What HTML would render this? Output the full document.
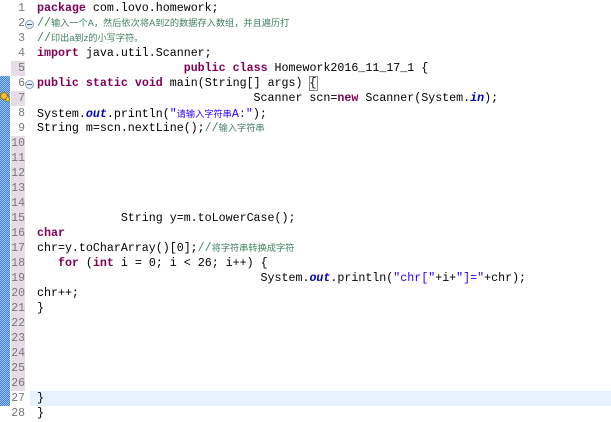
<!DOCTYPE html><html><head><style>
body{margin:0;width:611px;height:422px;background:#fff;overflow:hidden;position:relative;font-family:"Liberation Mono",monospace;font-size:11.65px}
.chk{position:absolute;left:0;top:76px;width:10px;height:330px;background-color:#9fc3ee;background-image:linear-gradient(45deg,#3f7fd8 25%,transparent 25%,transparent 75%,#3f7fd8 75%),linear-gradient(45deg,#3f7fd8 25%,transparent 25%,transparent 75%,#3f7fd8 75%);background-size:2px 2px;background-position:0 0,1px 1px}
.ln{position:absolute;left:11px;width:14px;height:15px;line-height:15px;text-align:right;color:#787878;font-size:11.5px}
.p{background:#e8dbe8}
.c{position:absolute;left:37px;height:15px;line-height:15px;white-space:pre;color:#000}
.k{color:#7f0055;font-weight:bold}
.s{color:#2a00ff}
.cm{color:#3f7f5f;font-family:"Liberation Sans","Noto Sans CJK SC",sans-serif;font-size:9.2px}
.o{color:#0000c0;font-style:italic;font-weight:bold}
.hl{position:absolute;left:30px;right:0;top:391px;height:15px;background:#e8f2fe}
</style></head><body>
<div class="chk"></div>
<div class="hl"></div>
<div class="ln" style="top:1px">1</div>
<div class="ln" style="top:16px">2</div>
<div class="ln" style="top:31px">3</div>
<div class="ln" style="top:46px">4</div>
<div class="ln p" style="top:61px">5</div>
<div class="ln" style="top:76px">6</div>
<div class="ln p" style="top:91px">7</div>
<div class="ln" style="top:106px">8</div>
<div class="ln" style="top:121px">9</div>
<div class="ln p" style="top:136px">10</div>
<div class="ln p" style="top:151px">11</div>
<div class="ln p" style="top:166px">12</div>
<div class="ln p" style="top:181px">13</div>
<div class="ln p" style="top:196px">14</div>
<div class="ln p" style="top:211px">15</div>
<div class="ln p" style="top:226px">16</div>
<div class="ln p" style="top:241px">17</div>
<div class="ln p" style="top:256px">18</div>
<div class="ln p" style="top:271px">19</div>
<div class="ln p" style="top:286px">20</div>
<div class="ln p" style="top:301px">21</div>
<div class="ln p" style="top:316px">22</div>
<div class="ln p" style="top:331px">23</div>
<div class="ln p" style="top:346px">24</div>
<div class="ln p" style="top:361px">25</div>
<div class="ln p" style="top:376px">26</div>
<div class="ln" style="top:391px">27</div>
<div class="ln" style="top:406px">28</div>
<svg style="position:absolute;left:25px;top:20px" width="9" height="9"><circle cx="4.5" cy="4.5" r="4" fill="#e8eef8" stroke="#8aa0c0"/><line x1="2" y1="4.5" x2="7" y2="4.5" stroke="#405878"/></svg>
<svg style="position:absolute;left:25px;top:80px" width="9" height="9"><circle cx="4.5" cy="4.5" r="4" fill="#e8eef8" stroke="#8aa0c0"/><line x1="2" y1="4.5" x2="7" y2="4.5" stroke="#405878"/></svg>
<svg style="position:absolute;left:0px;top:92px" width="10" height="10"><circle cx="4" cy="4" r="3.5" fill="#f0c040" stroke="#a07010"/><polygon points="5,9 8,3 10,9" fill="#f8d030" stroke="#806000" stroke-width=".6"/></svg>
<div class="c" style="top:1px"><span class="k">package</span> com.lovo.homework;</div>
<div class="c" style="top:16px"><span class="cm" style="font-family:'Liberation Mono';font-size:11.65px">//</span><span class="cm">输入一个A，然后依次将A到Z的数据存入数组，并且遍历打</span></div>
<div class="c" style="top:31px"><span class="cm" style="font-family:'Liberation Mono';font-size:11.65px">//</span><span class="cm">印出a到z的小写字符。</span></div>
<div class="c" style="top:46px"><span class="k">import</span> java.util.Scanner;</div>
<div class="c" style="top:61px">                     <span class="k">public</span> <span class="k">class</span> Homework2016_11_17_1 {</div>
<div class="c" style="top:76px"><span class="k">public</span> <span class="k">static</span> <span class="k">void</span> main(String[] args) <span style="outline:1px solid #888">{</span></div>
<div class="c" style="top:91px">                               Scanner scn=<span class="k">new</span> Scanner(System.<span class="o">in</span>);</div>
<div class="c" style="top:106px">System.<span class="o">out</span>.println(<span class="s">"<span style="font-family:'Noto Sans CJK SC';font-size:9.2px">请输入字符串</span>A:"</span>);</div>
<div class="c" style="top:121px">String m=scn.nextLine();<span class="cm" style="font-family:'Liberation Mono';font-size:11.65px">//</span><span class="cm">输入字符串</span></div>
<div class="c" style="top:211px">            String y=m.toLowerCase();</div>
<div class="c" style="top:226px"><span class="k">char</span></div>
<div class="c" style="top:241px">chr=y.toCharArray()[0];<span class="cm" style="font-family:'Liberation Mono';font-size:11.65px">//</span><span class="cm">将字符串转换成字符</span></div>
<div class="c" style="top:256px">   <span class="k">for</span> (<span class="k">int</span> i = 0; i &lt; 26; i++) {</div>
<div class="c" style="top:271px">                                System.<span class="o">out</span>.println(<span class="s">"chr["</span>+i+<span class="s">"]="</span>+chr);</div>
<div class="c" style="top:286px">chr++;</div>
<div class="c" style="top:301px">}</div>
<div class="c" style="top:391px">}</div>
<div class="c" style="top:406px">}</div>
</body></html>
